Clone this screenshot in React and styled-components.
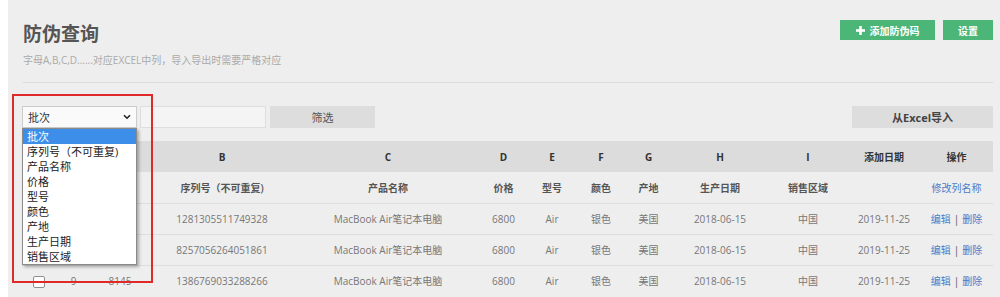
import React from 'react';
import styled, { createGlobalStyle } from 'styled-components';

const Global = createGlobalStyle`
  html, body { margin: 0; padding: 0; background: #ffffff; }
  body { font-family: "Open Sans", "Noto Sans CJK SC", sans-serif; }
  #root { margin-left: 8px; }
  * { box-sizing: border-box; }
`;

const Page = styled.div`
  background: #eeeeee;
  height: 297px;
  padding: 20px 7px 0 14px;
  overflow: hidden;
`;

const Header = styled.header`
  display: flex;
  justify-content: space-between;
  align-items: flex-start;
`;

const Title = styled.h1`
  margin: 2px 0 0 1px;
  font-size: 19px;
  line-height: 25px;
  font-weight: 700;
  color: #555555;
`;

const Subtitle = styled.p`
  margin: 6px 0 0 1px;
  font-size: 10px;
  line-height: 14px;
  color: #aaaaaa;
`;

const Actions = styled.div`
  display: flex;
  gap: 8px;
`;

const GreenButton = styled.button`
  height: 20px;
  width: ${(p) => p.$w}px;
  background: #4cb678;
  color: #ffffff;
  border: 0;
  padding: 0;
  font-family: inherit;
  font-weight: 700;
  font-size: 10px;
  display: flex;
  align-items: center;
  justify-content: center;
  gap: 5px;
`;

const Divider = styled.hr`
  margin: 15px 0 0 1px;
  border: 0;
  border-top: 1px solid #dcdcdc;
`;

const Toolbar = styled.div`
  margin-top: 23px;
  display: flex;
  height: 22px;
  align-items: stretch;
`;

const SelectWrap = styled.div`
  position: relative;
  width: 115px;
`;

const SelectBox = styled.div`
  height: 22px;
  border: 1px solid #cccccc;
  background: #fafafa;
  padding: 0 5px 0 5px;
  display: flex;
  align-items: center;
  justify-content: space-between;
  font-size: 11px;
  color: #333333;
`;

const DropList = styled.ul`
  position: absolute;
  top: 22px;
  left: 0;
  width: 115px;
  margin: 0;
  padding: 0;
  list-style: none;
  background: #ffffff;
  border: 1px solid #8a8a8a;
  box-shadow: 2px 2px 3px rgba(0, 0, 0, 0.3);
  z-index: 2;
`;

const Option = styled.li`
  height: 15px;
  line-height: 15px;
  padding-left: 4px;
  font-size: 11px;
  color: ${(p) => (p.$active ? '#ffffff' : '#222222')};
  background: ${(p) => (p.$active ? '#3d8ee8' : 'transparent')};
  white-space: nowrap;
`;

const RedBox = styled.div`
  position: absolute;
  left: -10px;
  top: -12px;
  width: 141px;
  height: 189px;
  border: 2px solid #e02a2a;
  pointer-events: none;
  z-index: 3;
`;

const TextInput = styled.input`
  width: 126px;
  margin-left: 3px;
  border: 1px solid #dedede;
  background: #f4f4f4;
  outline: none;
`;

const GrayButton = styled.button`
  width: ${(p) => p.$w}px;
  margin-left: ${(p) => (p.$push ? 'auto' : '4px')};
  height: 22px;
  background: #dddddd;
  border: 0;
  padding: 0;
  font-family: inherit;
  font-size: 11px;
  font-weight: ${(p) => (p.$bold ? 700 : 400)};
  color: ${(p) => (p.$bold ? '#444444' : '#555555')};
`;

const Table = styled.table`
  margin-top: 13px;
  width: 971px;
  border-collapse: collapse;
  table-layout: fixed;
`;

const HeadCell = styled.th`
  height: 31px;
  padding: 0;
  background: #dcdcdc;
  font-size: 10px;
  font-weight: 700;
  color: #333333;
  text-align: center;
  white-space: nowrap;
`;

const Row = styled.tr`
  border-top: ${(p) => (p.$first ? '0' : '1px solid #dddddd')};
`;

const Cell = styled.td`
  height: 31px;
  padding: 0;
  font-size: 10px;
  font-weight: ${(p) => (p.$label ? 600 : 400)};
  color: ${(p) => (p.$label ? '#555555' : '#777777')};
  text-align: center;
  white-space: nowrap;
  overflow: visible;
`;

const Link = styled.a`
  color: #4a7cc7;
  text-decoration: none;
`;

const Sep = styled.span`
  color: #555555;
  margin: 0 3px;
`;

const Check = styled.span`
  display: inline-block;
  width: 12px;
  height: 12px;
  border: 1px solid #8f8f8f;
  border-radius: 2px;
  background: #ffffff;
  vertical-align: middle;
`;

const widths = [33, 37, 56, 148, 184, 47, 50, 48, 47, 96, 80, 72, 73];
const letters = ['', '', 'A', 'B', 'C', 'D', 'E', 'F', 'G', 'H', 'I', '添加日期', '操作'];
const labels = ['批次', '序列号（不可重复)', '产品名称', '价格', '型号', '颜色', '产地', '生产日期', '销售区域'];

const rows = [
  { idx: 7, batch: '8143', serial: '1281305511749328' },
  { idx: 8, batch: '8144', serial: '8257056264051861' },
  { idx: 9, batch: '8145', serial: '1386769033288266' },
];

function Plus() {
  return (
    <svg width="9" height="9" viewBox="0 0 9 9" aria-hidden="true">
      <rect x="3.2" y="0" width="2.6" height="9" fill="#fff" />
      <rect x="0" y="3.2" width="9" height="2.6" fill="#fff" />
    </svg>
  );
}

function Chevron() {
  return (
    <svg width="8" height="6" viewBox="0 0 8 6" aria-hidden="true">
      <path d="M1 1.2 L4 4.2 L7 1.2" fill="none" stroke="#222" strokeWidth="1.6" />
    </svg>
  );
}

export default function App() {
  return (
    <>
      <Global />
      <Page>
        <Header>
          <div>
            <Title>防伪查询</Title>
            <Subtitle>字母A,B,C,D......对应EXCEL中列，导入导出时需要严格对应</Subtitle>
          </div>
          <Actions>
            <GreenButton $w={95}>
              <Plus />
              添加防伪码
            </GreenButton>
            <GreenButton $w={50}>设置</GreenButton>
          </Actions>
        </Header>
        <Divider />
        <Toolbar>
          <SelectWrap>
            <SelectBox>
              <span>批次</span>
              <Chevron />
            </SelectBox>
            <DropList>
              {labels.map((l, i) => (
                <Option key={l} $active={i === 0}>
                  {l}
                </Option>
              ))}
            </DropList>
            <RedBox />
          </SelectWrap>
          <TextInput />
          <GrayButton $w={105}>筛选</GrayButton>
          <GrayButton $w={141} $push $bold>
            从Excel导入
          </GrayButton>
        </Toolbar>
        <Table>
          <colgroup>
            {widths.map((w, i) => (
              <col key={i} style={{ width: w }} />
            ))}
          </colgroup>
          <thead>
            <tr>
              {letters.map((l, i) => (
                <HeadCell key={i}>{l}</HeadCell>
              ))}
            </tr>
          </thead>
          <tbody>
            <Row $first>
              <Cell />
              <Cell />
              {labels.map((l) => (
                <Cell key={l} $label>
                  {l}
                </Cell>
              ))}
              <Cell />
              <Cell>
                <Link>修改列名称</Link>
              </Cell>
            </Row>
            {rows.map((r) => (
              <Row key={r.idx}>
                <Cell>
                  <Check />
                </Cell>
                <Cell>{r.idx}</Cell>
                <Cell>{r.batch}</Cell>
                <Cell>{r.serial}</Cell>
                <Cell>MacBook Air笔记本电脑</Cell>
                <Cell>6800</Cell>
                <Cell>Air</Cell>
                <Cell>银色</Cell>
                <Cell>美国</Cell>
                <Cell>2018-06-15</Cell>
                <Cell>中国</Cell>
                <Cell>2019-11-25</Cell>
                <Cell>
                  <Link>编辑</Link>
                  <Sep>|</Sep>
                  <Link>删除</Link>
                </Cell>
              </Row>
            ))}
          </tbody>
        </Table>
      </Page>
    </>
  );
}
